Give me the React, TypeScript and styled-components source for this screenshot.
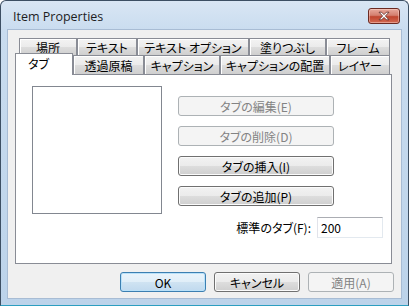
import React from "react";
import styled, { createGlobalStyle, css } from "styled-components";

const Global = createGlobalStyle`
  html, body { margin: 0; padding: 0; background: #ffffff; }
  body { font-family: "Noto Sans CJK JP", "Noto Sans", sans-serif; }
`;

const JP = `"Noto Sans CJK JP", "Noto Sans", sans-serif`;

const Window = styled.div`
  width: 409px;
  height: 306px;
  box-sizing: border-box;
  border: 1px solid #3d4f63;
  border-bottom-color: #2c9ec0;
  border-radius: 6px 6px 0 0;
  background: linear-gradient(180deg, #d9e6f4 0px, #c9dcef 30px, #bcd3ea 100%);
  display: flex;
  flex-direction: column;
  overflow: hidden;
`;

const TitleBar = styled.div`
  height: 29px;
  flex: none;
  display: flex;
  align-items: center;
  justify-content: space-between;
  padding: 0 8px 0 12px;
  box-sizing: border-box;
`;

const Title = styled.div`
  font-family: "Open Sans", "Noto Sans", sans-serif;
  font-size: 12.5px;
  color: #1e1e1e;
  margin-top: 1px;
`;

const CloseBtn = styled.div`
  width: 32px;
  height: 16px;
  margin-top: 1px;
  box-sizing: border-box;
  border: 1px solid #6b2a22;
  border-radius: 3px;
  background: linear-gradient(180deg, #e8a99c 0%, #d47f6f 45%, #c0452f 55%, #d36a52 100%);
  box-shadow: inset 0 0 0 1px rgba(255, 220, 210, 0.45);
  display: flex;
  align-items: center;
  justify-content: center;
`;

const Client = styled.div`
  flex: 1;
  margin: 0 7px 7px;
  background: #f0f0f0;
  box-shadow: 0 0 0 1px #a8bcd4;
  display: flex;
  flex-direction: column;
  padding: 8px 0 0 7px;
  box-sizing: border-box;
`;

const TabStrip = styled.div`
  display: flex;
  flex-direction: column;
  height: 36px;
`;

const TabRow = styled.div<{ $indent: number; $overlap?: boolean }>`
  display: flex;
  align-items: flex-end;
  padding-left: ${(p) => p.$indent}px;
  height: ${(p) => (p.$overlap ? 21 : 17)}px;
  margin-top: ${(p) => (p.$overlap ? -2 : 0)}px;
`;

const Tab = styled.div<{ $w: number; $active?: boolean }>`
  width: ${(p) => p.$w}px;
  box-sizing: border-box;
  border: 1px solid #898c95;
  border-bottom: none;
  font-family: ${JP};
  font-feature-settings: "palt";
  font-size: 12px;
  color: #000;
  display: flex;
  justify-content: center;
  white-space: nowrap;
  ${(p) =>
    p.$active
      ? css`
          height: 22px;
          margin-bottom: -1px;
          position: relative;
          z-index: 1;
          background: #ffffff;
          justify-content: flex-start;
          padding-left: 12px;
          align-items: flex-start;
          padding-top: 1px;
        `
      : css`
          height: 19px;
          background: linear-gradient(180deg, #f3f3f3 0%, #ebebeb 50%, #dddddd 51%, #cfcfcf 100%);
          box-shadow: inset 1px 1px 0 #ffffff;
          align-items: center;
          padding-top: 1px;
        `}
`;

const BackTab = styled(Tab)`
  height: 17px;
  align-items: flex-start;
  padding-top: 0px;
  line-height: 17px;
`;

const Panel = styled.div`
  width: 377px;
  height: 190px;
  box-sizing: border-box;
  border: 1px solid #898c95;
  background: #ffffff;
  display: flex;
  padding: 11px 0 0 16px;
  gap: 16px;
`;

const ListBox = styled.div`
  width: 130px;
  height: 128px;
  box-sizing: border-box;
  border: 1px solid #828790;
  background: #fff;
`;

const RightCol = styled.div`
  width: 205px;
  margin-top: 10px;
  display: flex;
  flex-direction: column;
  gap: 10px;
`;

const Button = styled.div<{ $w: number; $disabled?: boolean; $default?: boolean }>`
  width: ${(p) => p.$w}px;
  height: 20px;
  box-sizing: border-box;
  border-radius: 3px;
  font-family: ${JP};
  font-feature-settings: "palt";
  font-size: 12px;
  display: flex;
  align-items: center;
  justify-content: center;
  border: 1px solid #707070;
  color: #000;
  background: linear-gradient(180deg, #f2f2f2 0%, #ebebeb 50%, #dddddd 51%, #cfcfcf 100%);
  box-shadow: inset 0 0 0 1px #fbfbfb;
  ${(p) =>
    p.$disabled &&
    css`
      border-color: #adb2b5;
      background: #f4f4f4;
      color: #838383;
      box-shadow: none;
    `}
  ${(p) =>
    p.$default &&
    css`
      border-color: #3c7fb1;
      background: linear-gradient(180deg, #eaf4fb 0%, #e0eef8 50%, #cfe3f2 51%, #c0d9ee 100%);
      box-shadow: inset 0 0 0 1px #b9e1f9;
    `}
`;

const FieldRow = styled.div`
  display: flex;
  justify-content: flex-end;
  align-items: center;
  gap: 6px;
  margin-top: 1px;
`;

const Label = styled.div`
  font-family: ${JP};
  font-feature-settings: "palt";
  font-size: 12px;
  color: #000;
`;

const Input = styled.div`
  width: 66px;
  height: 21px;
  box-sizing: border-box;
  border: 1px solid;
  border-color: #abadb3 #e3e9ef #e3e9ef #e2e3ea;
  background: #fff;
  font-family: ${JP};
  font-size: 12px;
  display: flex;
  align-items: center;
  padding-left: 3px;
`;

const Footer = styled.div`
  display: flex;
  justify-content: flex-end;
  gap: 8px;
  padding-right: 7px;
  margin-top: 8px;
`;

const row1 = [
  { t: "場所", w: 58 },
  { t: "テキスト", w: 60 },
  { t: "テキスト オプション", w: 112 },
  { t: "塗りつぶし", w: 77 },
  { t: "フレーム", w: 64 },
];

const row2 = [
  { t: "タブ", w: 58, active: true },
  { t: "透過原稿", w: 71 },
  { t: "キャプション", w: 76 },
  { t: "キャプションの配置", w: 110 },
  { t: "レイヤー", w: 60 },
];

export default function App() {
  return (
    <>
      <Global />
      <Window>
        <TitleBar>
          <Title>Item Properties</Title>
          <CloseBtn>
            <svg width="14" height="10" viewBox="0 0 14 10">
              <path
                d="M2 1.2 L4.6 1.2 L7 3.6 L9.4 1.2 L12 1.2 L8.4 5 L12 8.8 L9.4 8.8 L7 6.4 L4.6 8.8 L2 8.8 L5.6 5 Z"
                fill="#ffffff"
                stroke="#5a2a24"
                strokeWidth="0.8"
                strokeLinejoin="round"
              />
            </svg>
          </CloseBtn>
        </TitleBar>
        <Client>
          <TabStrip>
            <TabRow $indent={4}>
              {row1.map((t) => (
                <BackTab key={t.t} $w={t.w}>
                  {t.t}
                </BackTab>
              ))}
            </TabRow>
            <TabRow $indent={0} $overlap>
              {row2.map((t) => (
                <Tab key={t.t} $w={t.w} $active={t.active}>
                  {t.t}
                </Tab>
              ))}
            </TabRow>
          </TabStrip>
          <Panel>
            <ListBox />
            <RightCol>
              <Button $w={156} $disabled>タブの編集(E)</Button>
              <Button $w={156} $disabled>タブの削除(D)</Button>
              <Button $w={156}>タブの挿入(I)</Button>
              <Button $w={156}>タブの追加(P)</Button>
              <FieldRow>
                <Label>標準のタブ(F):</Label>
                <Input>200</Input>
              </FieldRow>
            </RightCol>
          </Panel>
          <Footer>
            <Button $w={86} $default>OK</Button>
            <Button $w={86}>キャンセル</Button>
            <Button $w={86} $disabled>適用(A)</Button>
          </Footer>
        </Client>
      </Window>
    </>
  );
}
